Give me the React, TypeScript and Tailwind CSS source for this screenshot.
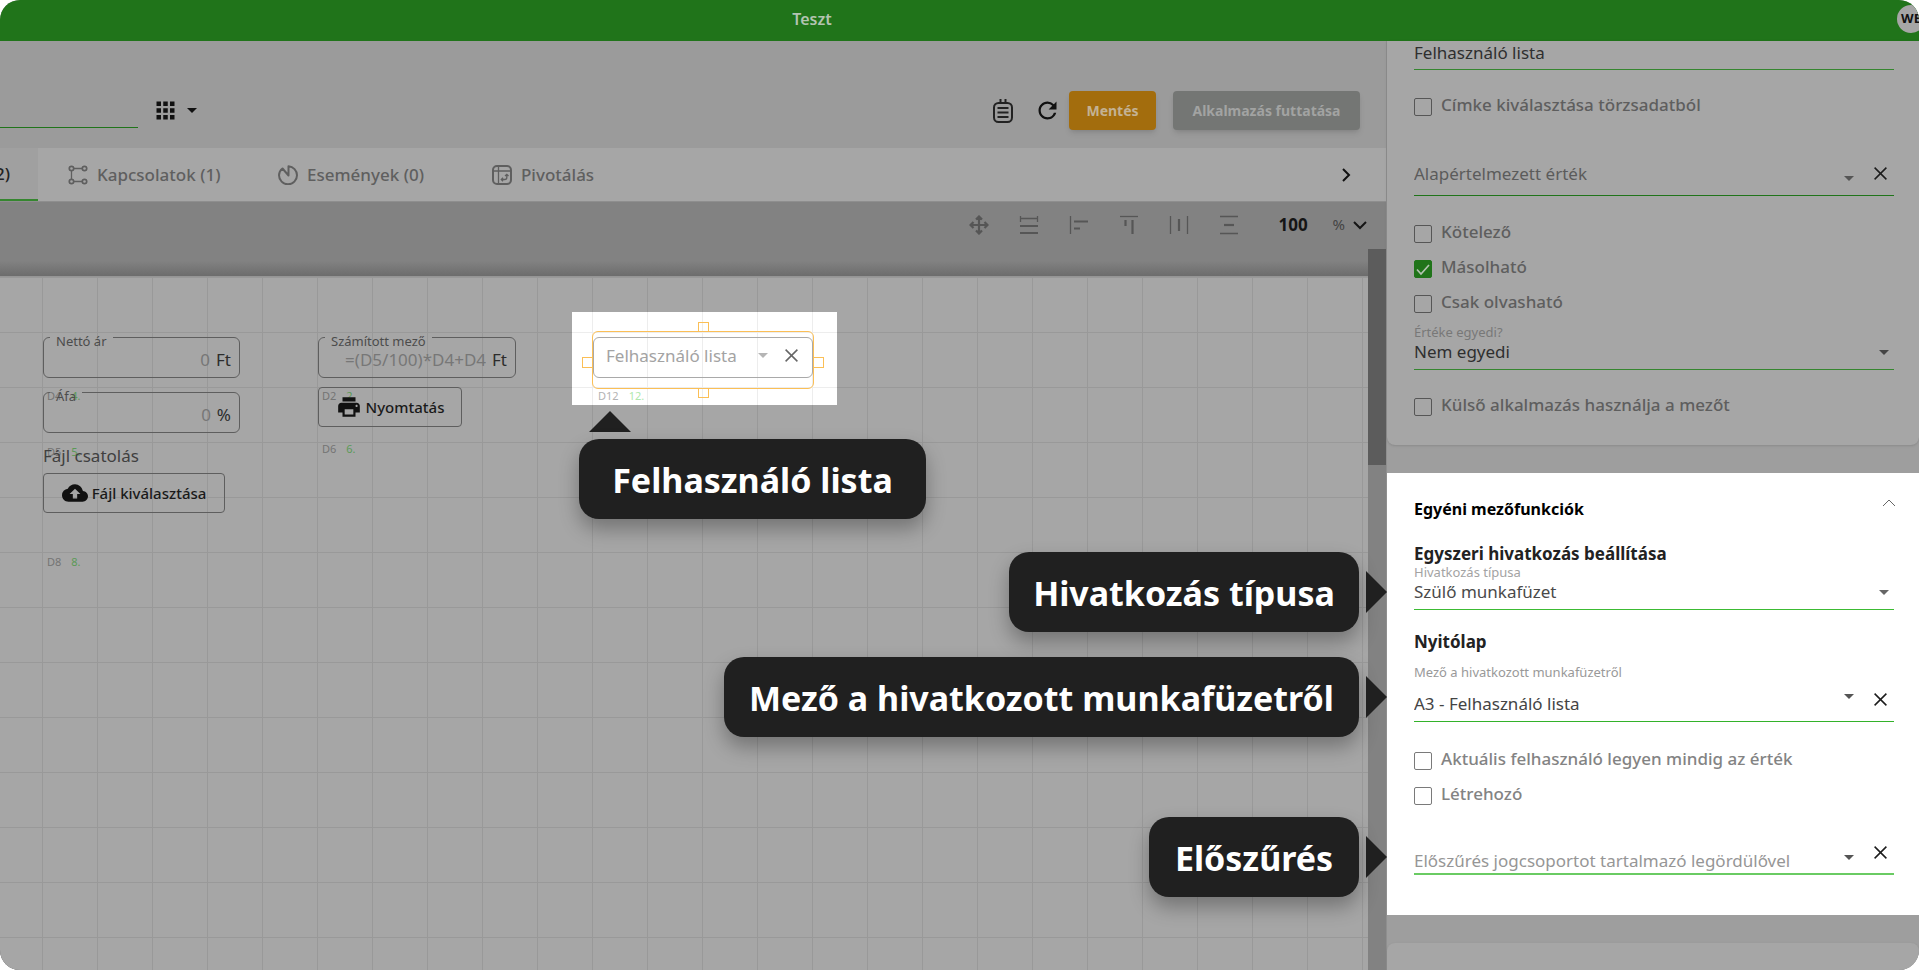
import { useState } from "react";
import { MdApps, MdCloudUpload, MdPrint, MdRefresh } from "react-icons/md";

const Caret = ({ className = "" }: { className?: string }) => (
    <svg width="10" height="5" viewBox="0 0 10 5" className={`shrink-0 ${className}`} fill="currentColor">
        <path d="M0 0h10L5 5z" />
    </svg>
);

const Cross = ({ size = 13 }: { size?: number }) => (
    <svg width={size} height={size} viewBox="0 0 13 13" className="block" stroke="currentColor" strokeWidth="1.5" fill="none">
        <path d="M.6.6l11.8 11.8M12.4.6L.6 12.4" />
    </svg>
);

const Chevron = ({ className = "", width = 2 }: { className?: string; width?: number }) => (
    <svg width="14" height="14" viewBox="0 0 14 14" className={className} stroke="currentColor" strokeWidth={width} fill="none">
        <path d="M1 4l6 6 6-6" />
    </svg>
);

/* ---------- Sidebar form parts ---------- */

const CheckRow = ({ label, checked = false, dim = false }: { label: string; checked?: boolean; dim?: boolean }) => {
    const [on, setOn] = useState(checked);
    return (
        <label className={`flex h-[18px] items-center gap-[9px] text-[17px] font-medium ${dim ? "text-[#5e5e5e]" : "text-[#838383]"}`}>
            <span className="relative flex size-[18px] shrink-0">
                <input
                    type="checkbox"
                    checked={on}
                    onChange={() => setOn(!on)}
                    className={`size-[18px] appearance-none rounded-xs border checked:border-[#20741a] checked:bg-[#20741a] ${dim ? "border-[#565656]" : "border-[#7a7a7a]"}`}
                />
                {on && (
                    <svg viewBox="0 0 18 18" className="pointer-events-none absolute inset-0" fill="none" stroke="#b4c4b2" strokeWidth="1.7">
                        <path d="M3 9.5l4 4.5 8-9" />
                    </svg>
                )}
            </span>
            <span className="pb-1 leading-[18px]">{label}</span>
        </label>
    );
};

const SelectField = ({ id, label, value, dim = false }: { id: string; label: string; value: string; dim?: boolean }) => (
    <div>
        <label htmlFor={id} className={`block text-[13px] leading-4 ${dim ? "text-[#787878]" : "text-[#a3a3a3]"}`}>{label}</label>
        <div className={`flex h-[30px] items-center border-b pb-[5px] pr-[5px] ${dim ? "border-[#35862f] text-[#2f2f2f]" : "border-[#3cbb33] text-[#4a4a4a]"}`}>
            <select id={id} className="min-w-0 flex-1 appearance-none bg-transparent text-[17px] leading-6 outline-none">
                <option>{value}</option>
            </select>
            <Caret className={dim ? "text-[#444]" : "text-[#666]"} />
        </div>
    </div>
);

interface ComboProps {
    id: string;
    label: string;
    value?: string;
    placeholder?: string;
    line: string;
    inputPad?: string;
    caretPad?: string;
}

const ComboField = ({ id, label, value, placeholder, line, inputPad = "", caretPad = "" }: ComboProps) => (
    <div className={`flex h-10 items-start pr-[7px] ${line}`}>
        <input
            id={id}
            aria-label={label}
            defaultValue={value}
            placeholder={placeholder}
            className={`min-w-0 flex-1 bg-transparent text-[17px] leading-6 outline-none placeholder:text-inherit placeholder:opacity-70 ${inputPad}`}
        />
        <button aria-label="Lista megnyitása" className={`text-[#555] ${caretPad}`}>
            <Caret />
        </button>
        <button aria-label="Törlés" className="ml-5 pt-[11px] text-[#1c1c1c]">
            <Cross />
        </button>
    </div>
);

const Sidebar = () => (
    <aside className="flex w-[533px] shrink-0 flex-col border-l border-[#8f8f8f] bg-[#9e9e9e]">
        <section className="rounded-b-lg bg-[#a6a6a6] pr-[25px] pb-[29px] pl-[27px] shadow-sm">
            <input
                aria-label="Címke"
                defaultValue="Felhasználó lista"
                className="block h-[29px] w-full border-b border-[#35862f] bg-transparent pb-[5px] text-[17px] text-[#2f2f2f] outline-none"
            />
            <div className="mt-7">
                <CheckRow dim label="Címke kiválasztása törzsadatból" />
            </div>
            <div className="mt-10 text-[#3c3c3c]">
                <ComboField
                    id="default-value"
                    label="Alapértelmezett érték"
                    placeholder="Alapértelmezett érték"
                    line="border-b border-[#20741a]"
                    inputPad="pt-1.5"
                    caretPad="pt-5"
                />
            </div>
            <div className="mt-[29px] flex flex-col gap-[17px]">
                <CheckRow dim label="Kötelező" />
                <CheckRow dim label="Másolható" checked />
                <CheckRow dim label="Csak olvasható" />
            </div>
            <div className="mt-[11px] mb-7">
                <SelectField dim id="unique" label="Értéke egyedi?" value="Nem egyedi" />
            </div>
            <CheckRow dim label="Külső alkalmazás használja a mezőt" />
        </section>

        <section className="mt-7 bg-white pr-[25px] pb-10 pl-[27px]">
            <button className="flex h-[71px] w-full items-center justify-between text-base font-bold text-black">
                Egyéni mezőfunkciók
                <Chevron className="-mr-0.5 mb-3 rotate-180 text-[#666]" width={1} />
            </button>
            <h3 className="text-[17px] leading-5 font-bold text-[#222]">Egyszeri hivatkozás beállítása</h3>
            <SelectField id="ref-type" label="Hivatkozás típusa" value="Szülő munkafüzet" />
            <h3 className="mt-[22px] text-[17px] leading-5 font-bold text-[#222]">Nyitólap</h3>
            <label htmlFor="ref-field" className="mt-3 mb-0.5 block text-[13px] leading-4 text-[#999]">Mező a hivatkozott munkafüzetről</label>
            <div className="text-[#444]">
                <ComboField
                    id="ref-field"
                    label="Mező a hivatkozott munkafüzetről"
                    value="A3 - Felhasználó lista"
                    line="border-b border-[#33b22a]"
                    inputPad="pt-2.5"
                    caretPad="pt-3"
                />
            </div>
            <div className="my-[30px] flex flex-col gap-[17px]">
                <CheckRow label="Aktuális felhasználó legyen mindig az érték" />
                <CheckRow label="Létrehozó" />
            </div>
            <div className="text-[#6a6a6a]">
                <ComboField
                    id="prefilter"
                    label="Előszűrés"
                    placeholder="Előszűrés jogcsoportot tartalmazó legördülővel"
                    line="border-b-2 border-[#6acb63]"
                    inputPad="pt-3.5"
                    caretPad="pt-5"
                />
            </div>
        </section>

        <section className="mt-7 flex-1 rounded-t-lg bg-[#a6a6a6] shadow-sm" />
    </aside>
);

/* ---------- Toolbar icons ---------- */

const alignIcons = [
    { name: "Mozgatás", thin: "", thick: "M10 1.500v17M1.500 10h17M7 4.500l3-3 3 3M7 15.500l3 3 3-3M4.500 7l-3 3 3 3M15.500 7l3 3-3 3" },
    { name: "Azonos szélesség", thin: "M1.500 1v6M18.500 1v6M1.500 3.500h17", thick: "M1 11h18M1 18h18" },
    { name: "Balra igazítás", thin: "M1.500 1v18", thick: "M5 6.500h14M5 13.500h6" },
    { name: "Felülre igazítás", thin: "M1 1.500h18", thick: "M6.500 5v6M13.500 5v14" },
    { name: "Vízszintes elosztás", thin: "M1.500 1v18M18.500 1v18", thick: "M10 4v12" },
    { name: "Függőleges elosztás", thin: "M1 1.500h18M1 18.500h18", thick: "M5 10h10" },
];

const tabIconProps = { width: 20, height: 20, viewBox: "0 0 20 20", fill: "none", stroke: "currentColor", strokeWidth: 1.7 };

const RelationIcon = () => (
    <svg {...tabIconProps}>
        <circle cx="3.500" cy="3.500" r="2.200" />
        <circle cx="16.500" cy="3.500" r="2.200" />
        <circle cx="3.500" cy="16.500" r="2.200" />
        <circle cx="16.500" cy="16.500" r="2.200" />
        <path d="M6 3.500h8M3.500 6v8M6 16.500h8" strokeWidth="1.300" />
    </svg>
);

const EventIcon = () => (
    <svg {...tabIconProps} strokeWidth="2">
        <path d="M4.500 3.500C2.300 5.200 1 7.500 1 10.300a9 9 0 0 0 18 0C19 5.500 15.300 1.600 10.500 1.200V10.500L4.500 3.500z" strokeLinejoin="round" />
    </svg>
);

const PivotIcon = () => (
    <svg {...tabIconProps}>
        <rect x="1" y="1" width="18" height="18" rx="4" strokeWidth="2" />
        <path d="M1 6h18M6.500 1v18" strokeWidth="1.300" />
        <path d="M9.500 14.500h3.300c1.200 0 2-.8 2-2V9.500M11 12.800l-1.700 1.700 1.700 1.700M13 11l1.800-1.700L16.500 11" strokeWidth="1.300" />
    </svg>
);

/* ---------- Canvas parts ---------- */

const Tag = ({ id, order, className }: { id: string; order: string; className: string }) => (
    <div className={`absolute flex gap-2.5 text-[11px] leading-4 text-[#747474] ${className}`}>
        <span>{id}</span>
        <span className="text-[#5b9a57]">{order}</span>
    </div>
);

const NumberBox = ({ label, hint, unit, className }: { label: string; hint: string; unit: string; className: string }) => (
    <fieldset className={`absolute h-[41px] min-w-0 rounded-md border border-[#5e5e5e] ${className}`}>
        <legend className="ml-1.5 h-0 px-1.5 text-[13px] leading-1.5 text-[#4c4c4c]">{label}</legend>
        <div className="flex h-[39px] items-center gap-1.5 pt-1 pr-2 text-[17px]">
            <input
                aria-label={label}
                placeholder={hint}
                className="w-0 flex-1 bg-transparent text-right text-[#777] outline-none placeholder:text-[#777]"
            />
            <span className="text-[#2c2c2c]">{unit}</span>
        </div>
    </fieldset>
);

const handleCls = "absolute border border-[#fbbf56]";

const SelectedField = () => (
    <div className="absolute top-[35px] left-[572px] h-[93px] w-[265px] bg-white bg-[linear-gradient(to_right,#ededed_1px,transparent_1px),linear-gradient(to_bottom,#ededed_1px,transparent_1px)] bg-[size:55px_55px] bg-[position:20px_20px]">
        <div className="absolute top-[25px] left-[21px] flex h-[41px] w-[220px] items-center rounded-md border border-[#a9a9a9] pr-3.5 pb-1 pl-3">
            <input
                aria-label="Felhasználó lista mező"
                placeholder="Felhasználó lista"
                className="min-w-0 flex-1 bg-transparent text-[17px] outline-none placeholder:text-[#a3a3a3]"
            />
            <Caret className="text-[#b5b5b5]" />
            <button aria-label="Mező törlése" className="ml-[17px] text-[#666]">
                <Cross />
            </button>
        </div>
        <div className="absolute top-[19px] left-5 h-[58px] w-[222px] rounded-md border border-[#fbbf56]" />
        <span className={`${handleCls} top-2.5 left-[126px] h-2.5 w-[11px]`} />
        <span className={`${handleCls} top-[76px] left-[126px] h-2.5 w-[11px]`} />
        <span className={`${handleCls} top-[45px] left-2.5 size-[11px]`} />
        <span className={`${handleCls} top-[45px] left-[241px] size-[11px]`} />
        <div className="absolute top-[76px] left-[26px] flex gap-2.5 text-[11px] leading-4 text-[#b3b3b3]">
            <span>D12</span>
            <span className="text-[#b0e8ac]">12.</span>
        </div>
    </div>
);

const Canvas = () => (
    <div className="relative mt-[27px] flex-1 overflow-hidden border-t border-[#959595] bg-[#a6a6a6] bg-[linear-gradient(to_right,#999_1px,transparent_1px),linear-gradient(to_bottom,#999_1px,transparent_1px)] bg-[size:55px_55px] bg-[position:42px_0px]">
        <Tag id="D4" order="4." className="top-[111px] left-[47px]" />
        <Tag id="D5" order="5." className="top-[167px] left-[47px]" />
        <Tag id="D2" order="2." className="top-[111px] left-[322px]" />
        <Tag id="D6" order="6." className="top-[164px] left-[322px]" />
        <Tag id="D8" order="8." className="top-[277px] left-[47px]" />

        <NumberBox label="Nettó ár" hint="0" unit="Ft" className="top-[60px] left-[43px] w-[197px]" />
        <NumberBox label="Áfa" hint="0" unit="%" className="top-[115px] left-[43px] w-[197px]" />
        <NumberBox label="Számított mező" hint="=(D5/100)*D4+D4" unit="Ft" className="top-[60px] left-[318px] w-[198px]" />

        <span className="absolute top-[167px] left-[43px] text-[17px] leading-6 text-[#404040]">Fájl csatolás</span>
        <button className="absolute top-[196px] left-[43px] flex h-10 w-[182px] items-center justify-center gap-1 rounded border border-[#5e5e5e] text-[15px] font-medium text-[#1a1a1a]">
            <MdCloudUpload size={26} className="text-[#111]" />
            Fájl kiválasztása
        </button>
        <button className="absolute top-[110px] left-[318px] flex h-10 w-36 items-center justify-center gap-1 rounded border border-[#5e5e5e] text-[15px] font-medium text-[#1a1a1a]">
            <MdPrint size={26} className="text-[#111]" />
            Nyomtatás
        </button>

        <SelectedField />
    </div>
);

/* ---------- Callouts ---------- */

const calloutCls = "absolute flex h-20 items-center justify-center rounded-[20px] bg-[#202020] pt-0.5 text-[34px] font-bold whitespace-nowrap text-white shadow-[0_10px_20px_rgba(0,0,0,0.3)]";

const sideCallouts = [
    { text: "Hivatkozás típusa", box: "top-[303px] w-[350px]", arrow: "top-[322px]" },
    { text: "Mező a hivatkozott munkafüzetről", box: "top-[408px] w-[635px]", arrow: "top-[427px]" },
    { text: "Előszűrés", box: "top-[568px] w-[210px]", arrow: "top-[587px]" },
];

const Callouts = () => (
    <>
        <svg className="absolute top-[162px] left-[589px]" width="42" height="21" viewBox="0 0 42 21" fill="#202020">
            <path d="M21 0l21 21H0z" />
        </svg>
        <div className={`${calloutCls} top-[190px] left-[579px] w-[347px]`}>Felhasználó lista</div>
        {sideCallouts.map((c) => (
            <div key={c.text}>
                <div className={`${calloutCls} right-[27px] ${c.box}`}>{c.text}</div>
                <svg className={`absolute -right-px ${c.arrow}`} width="21" height="42" viewBox="0 0 21 42" fill="#202020">
                    <path d="M0 0l21 21L0 42z" />
                </svg>
            </div>
        ))}
    </>
);

const tabCls = "flex items-center gap-[9px] pl-[30px]";

const App = () => (
    <div className="flex min-h-screen flex-col overflow-hidden rounded-[20px] bg-[#9b9b9b] font-['Noto_Sans',sans-serif]">
        <header className="flex h-[41px] items-center bg-[#20741a]">
            <h1 className="flex-1 pb-1 text-center text-base font-semibold text-[#b3c4b1]">Teszt</h1>
            <div className="flex w-[295px] justify-end overflow-hidden">
                <span className="-mr-1.5 mb-1 flex size-7 items-center justify-center rounded-full bg-[#a6a6a6] text-[13px] font-bold text-[#111]">WE</span>
            </div>
        </header>

        <div className="flex flex-1">
            <main className="flex min-w-0 flex-1 flex-col">
                <div className="flex h-[107px] items-center pt-8">
                    <input aria-label="Név" className="mt-[23px] h-8 w-[138px] self-start border-b border-[#20741a] bg-transparent outline-none" />
                    <button aria-label="Nézet" className="ml-3.5 flex items-center gap-2 text-[#111]">
                        <MdApps size={27} />
                        <Caret />
                    </button>
                    <div className="mr-[26px] ml-auto flex items-center">
                        <button aria-label="Napló" className="text-[#222]">
                            <svg width="20" height="24" viewBox="0 0 20 24" fill="none" stroke="currentColor" strokeWidth="2">
                                <rect x="1" y="4" width="18" height="19" rx="4.500" />
                                <path d="M7.500 0v4M12.500 0v4M4.500 9h11M4.500 13.500h11M4.500 18h11" />
                            </svg>
                        </button>
                        <button aria-label="Frissítés" className="mr-2 ml-[21px] text-[#111]">
                            <MdRefresh size={27} />
                        </button>
                        <button className="h-[39px] w-[87px] rounded bg-[#a36d0d] text-sm font-bold text-[#c3b294] shadow-md">Mentés</button>
                        <button className="ml-[17px] h-[39px] w-[187px] rounded bg-[#747674] text-sm font-bold text-[#a2a3a2] shadow-md">Alkalmazás futtatása</button>
                    </div>
                </div>

                <nav className="flex h-[54px] items-stretch border-b border-[#8e8e8e] bg-[#a6a6a6] text-[17px] font-medium text-[#5f5f5f]">
                    <button className="flex w-[38px] items-center justify-end border-b-2 border-[#35862f] bg-[#a0a0a0] pr-7 whitespace-nowrap text-[#222]">2)</button>
                    <button className={`${tabCls} w-[210px]`}>
                        <RelationIcon />
                        Kapcsolatok (1)
                    </button>
                    <button className={`${tabCls} w-[214px]`}>
                        <EventIcon />
                        Események (0)
                    </button>
                    <button className={tabCls}>
                        <PivotIcon />
                        Pivotálás
                    </button>
                    <button aria-label="Következő fülek" className="mr-[33px] ml-auto text-[#111]">
                        <Chevron className="-rotate-90" />
                    </button>
                </nav>

                <div className="flex h-[47px] items-center justify-end bg-[#828282] pr-[19px] pb-0.5 text-[#565656]">
                    {alignIcons.map((icon) => (
                        <button key={icon.name} aria-label={icon.name} className="mr-[30px]">
                            <svg width="20" height="20" viewBox="0 0 20 20" fill="none" stroke="currentColor">
                                <path d={icon.thin} strokeWidth="1.300" />
                                <path d={icon.thick} strokeWidth="2.200" />
                            </svg>
                        </button>
                    ))}
                    <input aria-label="Nagyítás" defaultValue="100" className="ml-2.5 w-[54px] bg-transparent text-[17px] font-bold text-[#151515] outline-none" />
                    <span className="mr-2 text-[15px] text-[#444]">%</span>
                    <Chevron className="text-[#151515]" />
                </div>

                <div className="relative flex flex-1">
                    <div className="flex min-w-0 flex-1 flex-col bg-[linear-gradient(to_bottom,#828282_12px,#6c6c6c_27px)]">
                        <Canvas />
                    </div>
                    <div className="w-[18px] bg-[#828282]">
                        <div className="h-[216px] bg-[#5c5c5c]" />
                    </div>
                    <Callouts />
                </div>
            </main>

            <Sidebar />
        </div>
    </div>
);

export default App;
